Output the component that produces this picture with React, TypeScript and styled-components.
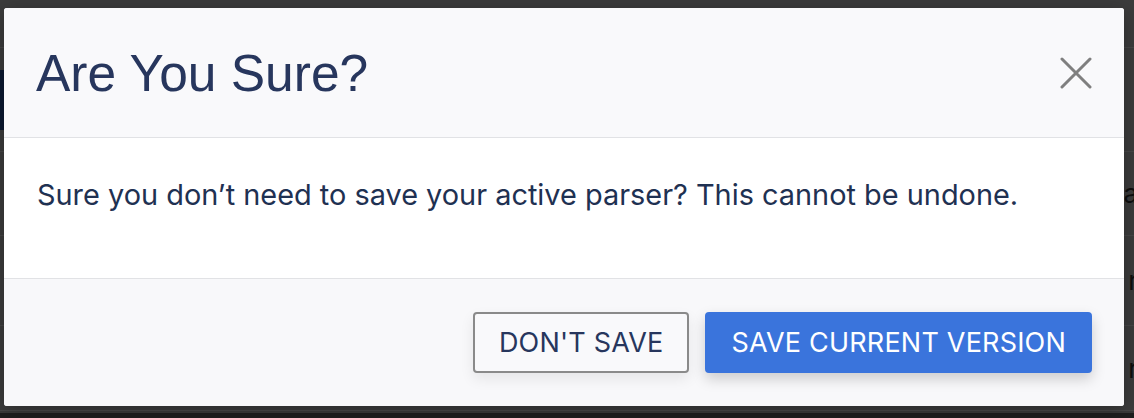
import React from 'react';
import styled, { createGlobalStyle } from 'styled-components';

const GlobalStyle = createGlobalStyle`
  html, body {
    margin: 0;
    padding: 0;
    background: #3c3c3c;
    overflow: hidden;
  }
  * {
    box-sizing: border-box;
  }
`;

const Page = styled.div`
  width: 1134px;
  height: 418px;
  display: flex;
  flex-direction: column;
  background: #3c3c3c;
`;

const TopBar = styled.div`
  height: 70px;
  flex-shrink: 0;
  border-top: 47px solid #3c3c3c;
  box-shadow: inset 0 1px 0 #474747;
`;

const NavBand = styled.div`
  height: 60px;
  flex-shrink: 0;
  display: flex;
`;

const NavBlock = styled.div`
  width: 240px;
  background: #0c1a31;
`;

const Row = styled.div<{ $h: number }>`
  height: ${(p) => p.$h}px;
  flex-shrink: 0;
  border-bottom: 1px solid #474747;
  display: flex;
  align-items: center;
  justify-content: flex-end;
  font-family: Inter, 'Noto Sans', sans-serif;
  font-size: 26px;
  color: #0e0e0e;
  overflow: hidden;
  white-space: nowrap;
`;

const RowText = styled.span`
  margin-right: -4px;
`;

const BottomBand = styled.div`
  flex: 1;
  background: #3a3a3a;
  border-bottom: 5px solid #1e1e1e;
`;

const Overlay = styled.div`
  position: fixed;
  inset: 0;
  padding: 8px 10px 12px 4px;
  display: flex;
  align-items: flex-start;
`;

const Modal = styled.div`
  width: 1120px;
  height: 398px;
  border-radius: 3px;
  overflow: hidden;
  display: flex;
  flex-direction: column;
  background: #ffffff;
  box-shadow: 0 4px 20px rgba(0, 0, 0, 0.3);
`;

const Header = styled.div`
  height: 130px;
  flex-shrink: 0;
  display: flex;
  align-items: center;
  justify-content: space-between;
  padding: 0 30px 0 32px;
  background: #f9f9fb;
  border-bottom: 1px solid #e1e2e5;
`;

const Title = styled.h1`
  margin: 0;
  font-family: 'Liberation Sans', Arial, sans-serif;
  font-weight: 400;
  font-size: 51.5px;
  line-height: 60px;
  color: #27365d;
`;

const CloseButton = styled.button`
  width: 36px;
  height: 36px;
  padding: 0;
  border: none;
  background: transparent;
  display: flex;
  align-items: center;
  justify-content: center;
  cursor: pointer;
`;

const Body = styled.div`
  height: 141px;
  flex-shrink: 0;
  display: flex;
  align-items: center;
  padding: 0 33px 28px;
  background: #ffffff;
  border-bottom: 1px solid #e1e2e5;
`;

const Message = styled.p`
  margin: 0;
  font-family: Inter, 'Noto Sans', sans-serif;
  font-size: 28.9px;
  color: #1f3152;
  white-space: nowrap;
`;

const Footer = styled.div`
  flex: 1;
  display: flex;
  align-items: center;
  justify-content: flex-end;
  gap: 16px;
  padding: 0 32px 0 0;
  background: #f8f8fa;
`;

const Button = styled.button<{ $primary?: boolean }>`
  height: 61px;
  padding: 0 24px;
  border-radius: 4px;
  font-family: Inter, 'Noto Sans', sans-serif;
  font-size: 27px;
  letter-spacing: 0.2px;
  cursor: pointer;
  border: 2px solid ${(p) => (p.$primary ? '#3a74dc' : '#8a8a8a')};
  background: ${(p) => (p.$primary ? '#3a74dc' : '#f9f9fb')};
  color: ${(p) => (p.$primary ? '#ffffff' : '#27365d')};
  box-shadow: 0 6px 14px rgba(0, 0, 0, ${(p) => (p.$primary ? 0.18 : 0.08)});
`;

const CloseIcon = () => (
  <svg width="32" height="32" viewBox="0 0 32 32" fill="none">
    <path d="M2 2L30 30M30 2L2 30" stroke="#7f7f7f" strokeWidth="3" strokeLinecap="round" />
  </svg>
);

const App = () => (
  <>
    <GlobalStyle />
    <Page>
      <TopBar />
      <NavBand>
        <NavBlock />
      </NavBand>
      <Row $h={22} />
      <Row $h={84}><RowText>a</RowText></Row>
      <Row $h={90}><RowText>r</RowText></Row>
      <Row $h={85}><RowText>r</RowText></Row>
      <BottomBand />
    </Page>
    <Overlay>
      <Modal>
        <Header>
          <Title>Are You Sure?</Title>
          <CloseButton aria-label="Close">
            <CloseIcon />
          </CloseButton>
        </Header>
        <Body>
          <Message>Sure you don’t need to save your active parser? This cannot be undone.</Message>
        </Body>
        <Footer>
          <Button>DON'T SAVE</Button>
          <Button $primary>SAVE CURRENT VERSION</Button>
        </Footer>
      </Modal>
    </Overlay>
  </>
);

export default App;
